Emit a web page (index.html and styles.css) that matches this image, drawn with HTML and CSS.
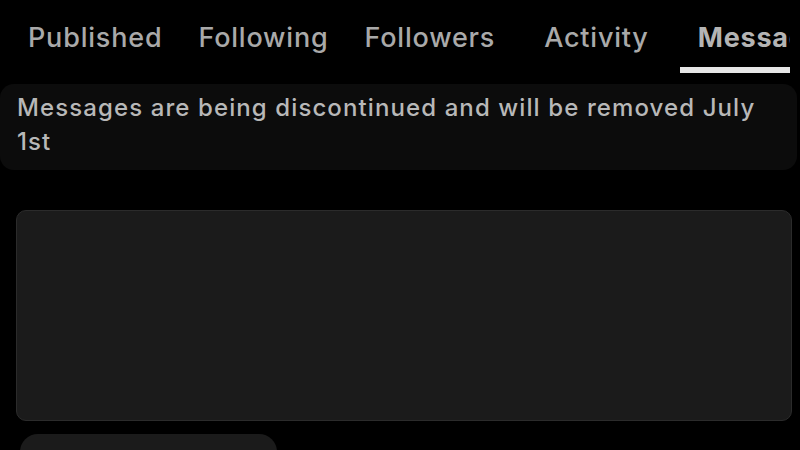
FILE: index.html
```html
<!DOCTYPE html>
<html lang="en">
<head>
    <meta charset="UTF-8">
    <meta name="viewport" content="width=device-width, initial-scale=1.0">
    <title>Messages</title>
    <link rel="stylesheet" href="styles.css">
</head>
<body>
<div class="page">
    <nav class="tabs">
        <a class="tab">Published</a>
        <a class="tab">Following</a>
        <a class="tab">Followers</a>
        <a class="tab wide">Activity</a>
        <a class="tab wide active">Messages</a>
    </nav>

    <div class="notice">
        <p>Messages are being discontinued and will be removed July 1st</p>
    </div>

    <div class="compose">
        <textarea class="input"></textarea>
        <button class="send"></button>
    </div>
</div>
</body>
</html>
```

FILE: styles.css
```css
*{
    padding: 0;
    margin: 0;
    box-sizing: border-box;
}
body{
    background-color: #000;
    font-family: Inter, "Noto Sans", sans-serif;
    overflow: hidden;
}
.page{
    width: 800px;
    height: 450px;
    overflow: hidden;
}
.tabs{
    width: 790px;
    height: 73px;
    display: flex;
    padding-left: 10px;
    overflow: hidden;
    white-space: nowrap;
}
.tab{
    flex-shrink: 0;
    padding: 21px 18px 0;
    font-size: 27px;
    font-weight: 500;
    letter-spacing: 0.8px;
    line-height: 34px;
    color: #a9a9a9;
    border-bottom: 6px solid transparent;
}
.tab.wide{
    margin-left: 13px;
}
.tab.active{
    font-weight: 700;
    color: #b4b4b4;
    border-bottom-color: #e6e6e6;
}
.notice{
    margin-top: 11px;
    width: 797px;
    min-height: 86px;
    padding: 7px 17px 0;
    background-color: #0c0c0c;
    border-radius: 14px;
}
.notice p{
    font-size: 24px;
    font-weight: 500;
    letter-spacing: 1.1px;
    line-height: 34px;
    color: #b8b8b8;
}
.compose{
    padding: 40px 8px 0 16px;
}
.input{
    display: block;
    width: 776px;
    height: 211px;
    background-color: #1b1b1b;
    border: 1px solid #2b2b2b;
    border-radius: 10px;
    resize: none;
    outline: none;
}
.send{
    display: block;
    margin: 13px 0 0 4px;
    width: 257px;
    height: 44px;
    background-color: #1b1b1b;
    border: none;
    border-radius: 18px;
}
```
